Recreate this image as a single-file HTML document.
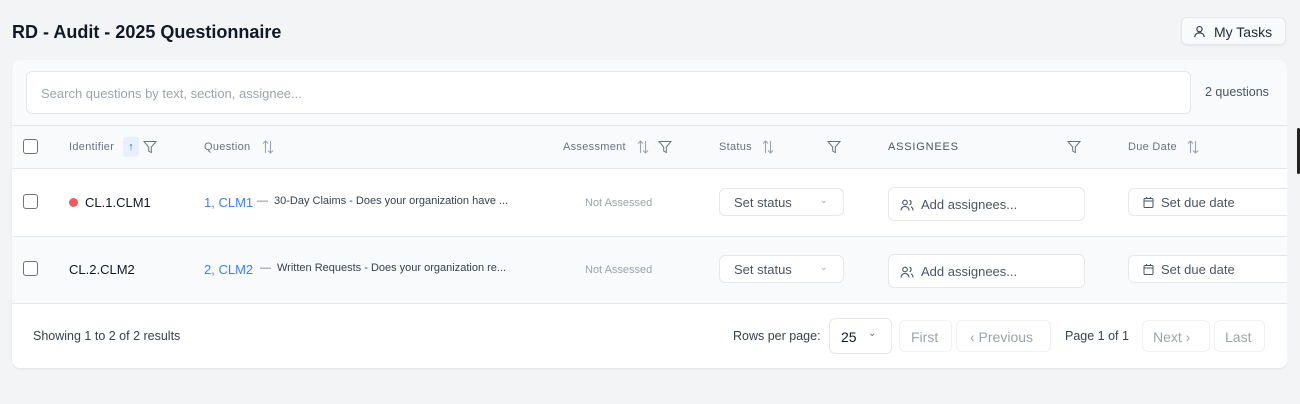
<!DOCTYPE html><html><head><style>
*{box-sizing:border-box;margin:0;padding:0}
body{width:1300px;height:404px;background:#f3f4f6;font-family:"Liberation Sans",sans-serif;position:relative;overflow:hidden;color:#111827}
.a{position:absolute}
.card{left:12px;top:60px;width:1275px;height:308px;background:#f9fafb;border-radius:8px;box-shadow:0 1px 2px rgba(0,0,0,.08);overflow:hidden}
.cb{width:15px;height:15px;border:1.5px solid #6b7280;border-radius:3px;background:#fff}
.th{font-size:11px;color:#6b7280;letter-spacing:.3px}
.btn{border:1px solid #e5e7eb;border-radius:6px;background:#fff}
svg{display:block}
</style></head><body>
<div class="a" style="left:12px;top:22px;font-size:18px;font-weight:bold;color:#111827">RD - Audit - 2025 Questionnaire</div>
<div class="a btn" style="left:1181px;top:17px;width:105px;height:28px;background:#f9fafb;box-shadow:0 1px 2px rgba(0,0,0,.06)">
<svg class="a" style="left:11px;top:7px" width="13" height="13" viewBox="0 0 14 14" fill="none" stroke="#374151" stroke-width="1.3"><circle cx="7" cy="4.5" r="2.8"/><path d="M2 13c0-3 2.2-4.5 5-4.5s5 1.5 5 4.5"/></svg>
<span class="a" style="left:32px;top:6px;font-size:14px;color:#1f2937">My Tasks</span></div>
<div class="a card">
<div class="a" style="left:14px;top:11px;width:1165px;height:43px;background:#fff;border:1px solid #e5e7eb;border-radius:6px"><span class="a" style="left:14px;top:14px;font-size:13px;color:#9ca3af">Search questions by text, section, assignee...</span></div>
<span class="a" style="left:1193px;top:25px;font-size:12.5px;color:#4b5563">2 questions</span>
<div class="a" style="left:0;top:65px;width:1275px;height:1px;background:#e5e7eb"></div>
<div class="a" style="left:0;top:108px;width:1275px;height:68px;background:#fff"></div>
<div class="a" style="left:0;top:108px;width:1275px;height:1px;background:#e5e7eb"></div>
<div class="a" style="left:0;top:176px;width:1275px;height:1px;background:#e5e7eb"></div>
<div class="a" style="left:0;top:243px;width:1275px;height:65px;background:#fff;border-top:1px solid #e5e7eb"></div>
</div>
<!-- header -->
<div class="a cb" style="left:23px;top:139px"></div>
<span class="a th" style="left:69px;top:141px">Identifier</span>
<div class="a" style="left:123px;top:137px;width:16px;height:20px;background:#e8f0fd;border-radius:3px;color:#2563eb;font-size:11px;text-align:center;line-height:20px">↑</div>
<svg class="a" style="left:143px;top:140px" width="14" height="14" viewBox="0 0 14 14" fill="none" stroke="#6b7280" stroke-width="1"><path d="M1 1.5h12L8.3 7v5.5l-2.6-1.5V7z"/></svg>
<span class="a th" style="left:204px;top:141px">Question</span>
<svg class="a" style="left:262px;top:140px" width="12" height="14" viewBox="0 0 12 14" fill="none" stroke="#9ca3af" stroke-width="1.1"><path d="M3.5 13V1M1 3.5L3.5 1 6 3.5M8.5 1v12M6 10.5l2.5 2.5 2.5-2.5"/></svg>
<span class="a th" style="left:563px;top:141px">Assessment</span>
<svg class="a" style="left:637px;top:140px" width="12" height="14" viewBox="0 0 12 14" fill="none" stroke="#9ca3af" stroke-width="1.1"><path d="M3.5 13V1M1 3.5L3.5 1 6 3.5M8.5 1v12M6 10.5l2.5 2.5 2.5-2.5"/></svg>
<svg class="a" style="left:658px;top:140px" width="14" height="14" viewBox="0 0 14 14" fill="none" stroke="#6b7280" stroke-width="1"><path d="M1 1.5h12L8.3 7v5.5l-2.6-1.5V7z"/></svg>
<span class="a th" style="left:719px;top:141px">Status</span>
<svg class="a" style="left:762px;top:140px" width="12" height="14" viewBox="0 0 12 14" fill="none" stroke="#9ca3af" stroke-width="1.1"><path d="M3.5 13V1M1 3.5L3.5 1 6 3.5M8.5 1v12M6 10.5l2.5 2.5 2.5-2.5"/></svg>
<svg class="a" style="left:827px;top:140px" width="14" height="14" viewBox="0 0 14 14" fill="none" stroke="#6b7280" stroke-width="1"><path d="M1 1.5h12L8.3 7v5.5l-2.6-1.5V7z"/></svg>
<span class="a th" style="left:888px;top:141px;color:#4b5563;letter-spacing:.8px">ASSIGNEES</span>
<svg class="a" style="left:1067px;top:140px" width="14" height="14" viewBox="0 0 14 14" fill="none" stroke="#6b7280" stroke-width="1"><path d="M1 1.5h12L8.3 7v5.5l-2.6-1.5V7z"/></svg>
<span class="a th" style="left:1128px;top:141px">Due Date</span>
<svg class="a" style="left:1187px;top:140px" width="12" height="14" viewBox="0 0 12 14" fill="none" stroke="#9ca3af" stroke-width="1.1"><path d="M3.5 13V1M1 3.5L3.5 1 6 3.5M8.5 1v12M6 10.5l2.5 2.5 2.5-2.5"/></svg>
<!-- rows -->
<div class="a cb" style="left:23px;top:194px"></div>
<div class="a" style="left:69px;top:198px;width:9px;height:9px;border-radius:50%;background:#f05a5a"></div>
<span class="a" style="left:85px;top:195px;font-size:13px;color:#111827">CL.1.CLM1</span>
<span class="a" style="left:204px;top:195px;font-size:13px;color:#3b82f6">1, CLM1</span>
<span class="a" style="left:257px;top:195px;font-size:11px;color:#6b7280">—</span>
<span class="a" style="left:274px;top:195px;font-size:11px;color:#374151">30-Day Claims - Does your organization have ...</span>
<span class="a" style="left:585px;top:197px;font-size:11px;color:#9ca3af">Not Assessed</span>
<div class="a cb" style="left:23px;top:261px"></div>
<span class="a" style="left:69px;top:262px;font-size:13px;color:#111827">CL.2.CLM2</span>
<span class="a" style="left:204px;top:262px;font-size:13px;color:#3b82f6">2, CLM2</span>
<span class="a" style="left:260px;top:262px;font-size:11px;color:#6b7280">—</span>
<span class="a" style="left:277px;top:262px;font-size:11px;color:#374151">Written Requests - Does your organization re...</span>
<span class="a" style="left:585px;top:264px;font-size:11px;color:#9ca3af">Not Assessed</span>
<!-- controls -->
<div class="a btn" style="left:719px;top:188px;width:125px;height:28px"><span class="a" style="left:14px;top:6px;font-size:13px;color:#4b5563">Set status</span><span class="a" style="left:100px;top:6px;font-size:9px;color:#9ca3af">⌄</span></div>
<div class="a btn" style="left:719px;top:255px;width:125px;height:28px"><span class="a" style="left:14px;top:6px;font-size:13px;color:#4b5563">Set status</span><span class="a" style="left:100px;top:6px;font-size:9px;color:#9ca3af">⌄</span></div>
<div class="a btn" style="left:888px;top:187px;width:197px;height:34px"><svg class="a" style="left:11px;top:10px" width="14" height="14" viewBox="0 0 14 14" fill="none" stroke="#4b5563" stroke-width="1.1"><circle cx="5" cy="4.5" r="2.3"/><path d="M1 12.5c0-2.5 1.8-4 4-4s4 1.5 4 4M9.5 2.3a2.3 2.3 0 010 4.4M11 8.8c1.2.6 2 1.8 2 3.7"/></svg><span class="a" style="left:32px;top:9px;font-size:13px;color:#4b5563">Add assignees...</span></div>
<div class="a btn" style="left:888px;top:254px;width:197px;height:34px"><svg class="a" style="left:11px;top:10px" width="14" height="14" viewBox="0 0 14 14" fill="none" stroke="#4b5563" stroke-width="1.1"><circle cx="5" cy="4.5" r="2.3"/><path d="M1 12.5c0-2.5 1.8-4 4-4s4 1.5 4 4M9.5 2.3a2.3 2.3 0 010 4.4M11 8.8c1.2.6 2 1.8 2 3.7"/></svg><span class="a" style="left:32px;top:9px;font-size:13px;color:#4b5563">Add assignees...</span></div>
<div class="a btn" style="left:1128px;top:188px;width:170px;height:28px"><svg class="a" style="left:14px;top:8px" width="11" height="11" viewBox="0 0 11 11" fill="none" stroke="#4b5563" stroke-width="1"><rect x="1" y="1.5" width="9" height="9" rx="1"/><path d="M1 4h9M3.5 0v2M7.5 0v2"/></svg><span class="a" style="left:32px;top:6px;font-size:13px;color:#4b5563">Set due date</span></div>
<div class="a btn" style="left:1128px;top:255px;width:170px;height:28px"><svg class="a" style="left:14px;top:8px" width="11" height="11" viewBox="0 0 11 11" fill="none" stroke="#4b5563" stroke-width="1"><rect x="1" y="1.5" width="9" height="9" rx="1"/><path d="M1 4h9M3.5 0v2M7.5 0v2"/></svg><span class="a" style="left:32px;top:6px;font-size:13px;color:#4b5563">Set due date</span></div>
<div class="a" style="left:1287px;top:60px;width:13px;height:344px;background:#f3f4f6"></div>
<div class="a" style="left:1297px;top:128px;width:3px;height:46px;background:#222;border-radius:2px"></div>
<!-- footer -->
<span class="a" style="left:33px;top:329px;font-size:12.5px;color:#374151">Showing 1 to 2 of 2 results</span>
<span class="a" style="left:733px;top:329px;font-size:12.5px;color:#374151">Rows per page:</span>
<div class="a btn" style="left:829px;top:318px;width:63px;height:36px"><span class="a" style="left:11px;top:10px;font-size:14px;color:#111827">25</span><span class="a" style="left:38px;top:9px;font-size:10px;color:#6b7280">⌄</span></div>
<div class="a btn" style="left:899px;top:320px;width:53px;height:32px;border-color:#f0f1f3"><span class="a" style="left:11px;top:8px;font-size:14px;color:#9ca3af">First</span></div>
<div class="a btn" style="left:956px;top:320px;width:95px;height:32px;border-color:#f0f1f3"><span class="a" style="left:13px;top:8px;font-size:14px;color:#9ca3af">‹ Previous</span></div>
<span class="a" style="left:1065px;top:329px;font-size:12.5px;color:#374151">Page 1 of 1</span>
<div class="a btn" style="left:1142px;top:320px;width:68px;height:32px;border-color:#f0f1f3"><span class="a" style="left:10px;top:8px;font-size:14px;color:#9ca3af">Next ›</span></div>
<div class="a btn" style="left:1214px;top:320px;width:51px;height:32px;border-color:#f0f1f3"><span class="a" style="left:10px;top:8px;font-size:14px;color:#9ca3af">Last</span></div>
</body></html>
